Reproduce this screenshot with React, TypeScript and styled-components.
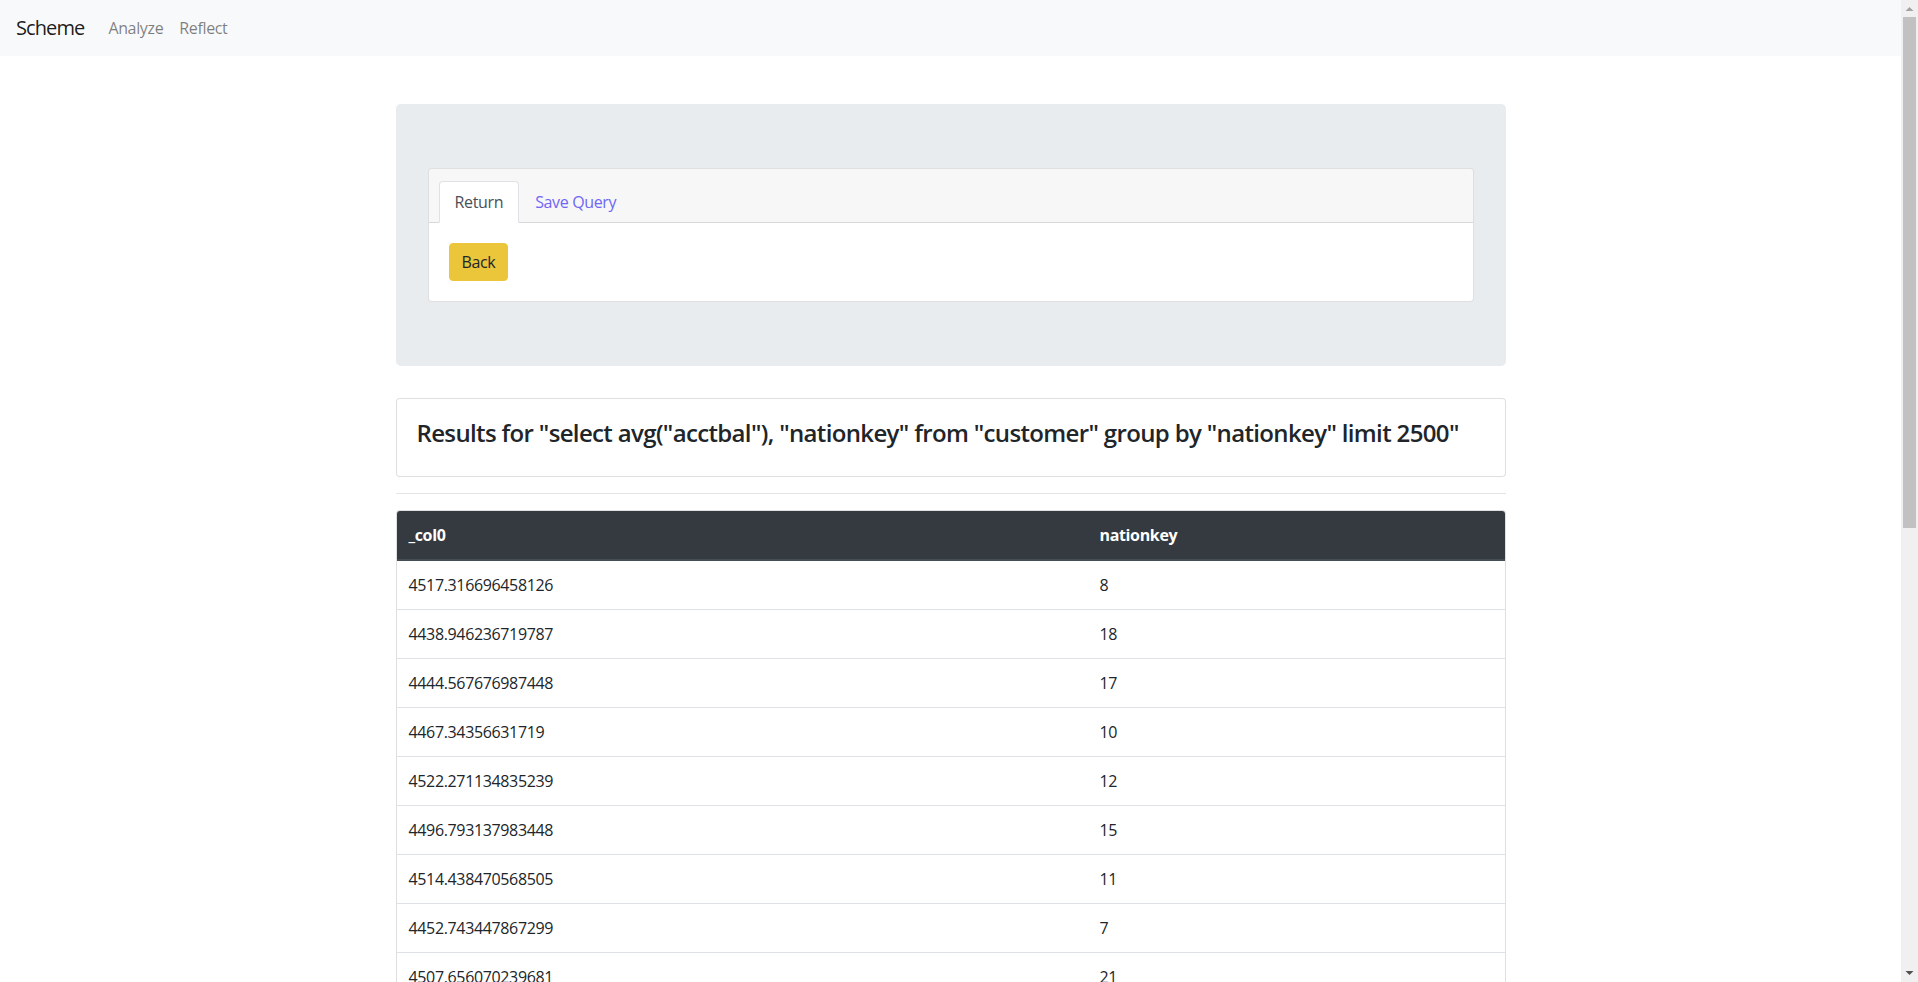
import React from "react";
import styled, { createGlobalStyle } from "styled-components";

const GlobalStyle = createGlobalStyle`
  body {
    margin: 0;
    font-family: "Open Sans", "Noto Sans", "Liberation Sans", sans-serif;
    font-size: 16px;
    line-height: 1.5;
    letter-spacing: -0.022em;
    color: #212529;
    background: #fff;
  }
  * {
    box-sizing: border-box;
  }
`;

const Page = styled.div`
  margin-right: 17px;
`;

// the browser's scrollbar, as seen in the screenshot
const ScrollTrack = styled.div`
  position: fixed;
  top: 0;
  right: 0;
  width: 17px;
  height: 100vh;
  background: #f0f0f0;
  display: flex;
  flex-direction: column;
  align-items: center;
`;

const ScrollArrow = styled.svg`
  flex: none;
  width: 17px;
  height: 17px;
`;

const ScrollThumb = styled.div`
  width: 13px;
  height: 511px;
  background: #c1c1c1;
`;

const ScrollGap = styled.div`
  flex: 1;
`;

const Navbar = styled.nav`
  display: flex;
  align-items: center;
  padding: 8px 16px;
  background: #f8f9fa;
`;

const Brand = styled.a`
  font-size: 20px;
  line-height: 30px;
  letter-spacing: -0.045em;
  padding: 5px 0;
  margin-right: 16px;
  color: rgba(0, 0, 0, 0.9);
  text-decoration: none;
`;

const NavLink = styled.a`
  padding: 8px;
  color: rgba(0, 0, 0, 0.5);
  text-decoration: none;
`;

const Container = styled.main`
  max-width: 1140px;
  margin: 48px auto 0;
  padding: 0 15px;
`;

const Jumbotron = styled.section`
  background: #e9ecef;
  border-radius: 4.8px;
  padding: 64px 32px;
  margin-bottom: 32px;
`;

const Card = styled.div`
  background: #fff;
  border: 1px solid rgba(0, 0, 0, 0.125);
  border-radius: 4px;
  overflow: hidden;
`;

const CardHeader = styled.div`
  background: rgba(0, 0, 0, 0.03);
  border-bottom: 1px solid rgba(0, 0, 0, 0.125);
  padding: 12px 20px 0 10px;
`;

const Tabs = styled.ul`
  display: flex;
  list-style: none;
  margin: 0 0 -1px;
  padding: 0;
`;

const Tab = styled.li<{ $active?: boolean }>`
  padding: 8px 15px;
  border: 1px solid ${(p) => (p.$active ? "#dee2e6" : "transparent")};
  border-bottom-color: ${(p) => (p.$active ? "#fff" : "transparent")};
  border-top-left-radius: 4px;
  border-top-right-radius: 4px;
  background: ${(p) => (p.$active ? "#fff" : "transparent")};
  color: ${(p) => (p.$active ? "#495057" : "#7066f5")};
  cursor: pointer;
`;

const CardBody = styled.div`
  padding: 20px;
`;

const BackButton = styled.button`
  font: inherit;
  letter-spacing: inherit;
  color: #212529;
  background: #ebc63b;
  border: 1px solid #ebc63b;
  border-radius: 4px;
  padding: 6px 12px;
  line-height: 24px;
  cursor: pointer;
`;

const Title = styled.h4`
  margin: 0 0 8px;
  font-size: 24px;
  font-weight: 600;
  letter-spacing: -0.027em;
  line-height: 1.2;
`;

const Rule = styled.hr`
  margin: 16px 0;
  border: 0;
  border-top: 1px solid rgba(0, 0, 0, 0.1);
`;

const Table = styled.table`
  width: 100%;
  border-collapse: collapse;
`;

const Th = styled.th`
  text-align: left;
  padding: 12px;
  background: #343a40;
  color: #fff;
  font-weight: 700;
  border-bottom: 2px solid #454d55;
`;

const Td = styled.td`
  padding: 12px;
  border-top: 1px solid #dee2e6;
`;

const rows: [string, number][] = [
  ["4517.316696458126", 8],
  ["4438.946236719787", 18],
  ["4444.567676987448", 17],
  ["4467.34356631719", 10],
  ["4522.271134835239", 12],
  ["4496.793137983448", 15],
  ["4514.438470568505", 11],
  ["4452.743447867299", 7],
  ["4507.656070239681", 21],
  ["4496.142473958333", 3],
  ["4465.122685185185", 24],
  ["4439.414839034205", 19],
  ["4488.124031007752", 2],
  ["4510.089592760181", 0],
  ["4455.782548701299", 13],
  ["4503.473799126638", 22],
  ["4488.902207637232", 6],
  ["4517.556591448931", 9],
  ["4505.340796019901", 4],
  ["4460.127074148297", 14],
  ["4526.903921568627", 20],
  ["4478.259868421053", 1],
  ["4493.880108991826", 16],
  ["4472.618502202643", 23],
  ["4481.334042553192", 5],
];

export default function App() {
  return (
    <>
      <GlobalStyle />
      <Page>
        <Navbar>
          <Brand href="#">Scheme</Brand>
          <NavLink href="#">Analyze</NavLink>
          <NavLink href="#">Reflect</NavLink>
        </Navbar>
        <Container>
          <Jumbotron>
            <Card>
              <CardHeader>
                <Tabs>
                  <Tab $active>Return</Tab>
                  <Tab>Save Query</Tab>
                </Tabs>
              </CardHeader>
              <CardBody>
                <BackButton>Back</BackButton>
              </CardBody>
            </Card>
          </Jumbotron>
          <Card>
            <CardBody>
              <Title>
                Results for "select avg("acctbal"), "nationkey" from "customer"
                group by "nationkey" limit 2500"
              </Title>
            </CardBody>
          </Card>
          <Rule />
          <Card>
            <Table>
              <thead>
                <tr>
                  <Th>_col0</Th>
                  <Th>nationkey</Th>
                </tr>
              </thead>
              <tbody>
                {rows.map(([avg, key]) => (
                  <tr key={key}>
                    <Td>{avg}</Td>
                    <Td>{key}</Td>
                  </tr>
                ))}
              </tbody>
            </Table>
          </Card>
        </Container>
      </Page>
      <ScrollTrack>
        <ScrollArrow viewBox="0 0 17 17">
          <path d="M4.5 11 L8.5 7 L12.5 11 Z" fill="#a3a3a3" />
        </ScrollArrow>
        <ScrollThumb />
        <ScrollGap />
        <ScrollArrow viewBox="0 0 17 17">
          <path d="M4.5 6 L8.5 10 L12.5 6 Z" fill="#505050" />
        </ScrollArrow>
      </ScrollTrack>
    </>
  );
}
